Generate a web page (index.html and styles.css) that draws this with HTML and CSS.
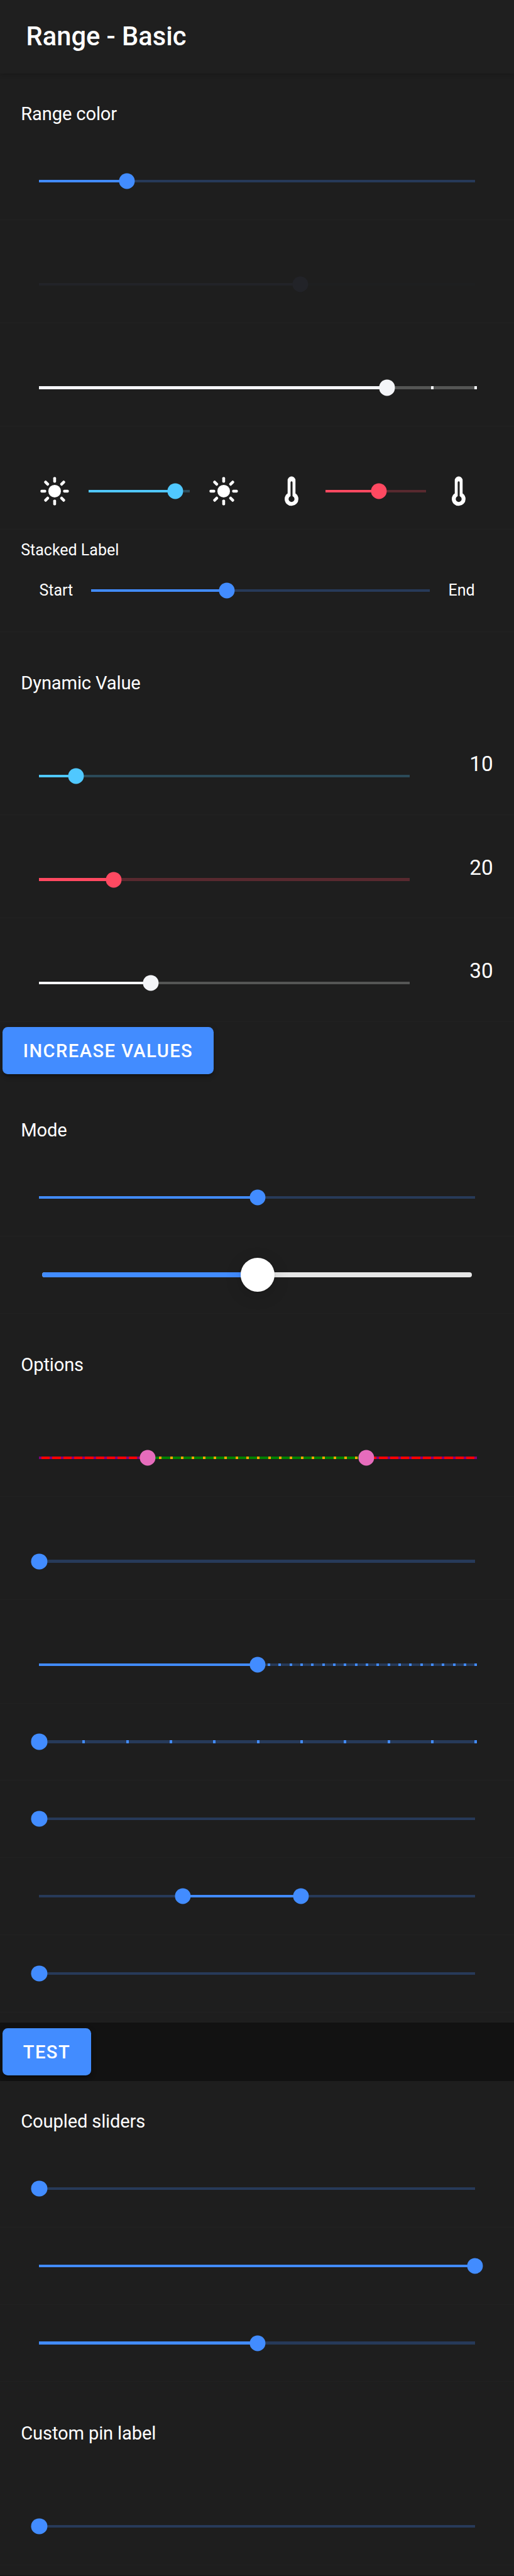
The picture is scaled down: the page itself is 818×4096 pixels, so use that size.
FILE: index.html
```html
<!DOCTYPE html>
<html lang="en">
<head>
<meta charset="utf-8">
<title>Range - Basic</title>
<link rel="stylesheet" href="styles.css">
</head>
<body>
<svg class="defs" aria-hidden="true">
  <symbol id="sunny" viewBox="0 0 66 66">
    <circle cx="33" cy="33" r="13.3"/>
    <g id="rays">
      <rect x="30" y="3.2" width="6" height="12" rx="2.4"/>
      <rect x="30" y="50.8" width="6" height="12" rx="2.4"/>
      <rect x="3.2" y="30" width="12" height="6" rx="2.4"/>
      <rect x="50.8" y="30" width="12" height="6" rx="2.4"/>
    </g>
    <use href="#rays" transform="rotate(45 33 33)"/>
  </symbol>
  <symbol id="thermometer" viewBox="0 0 512 512">
    <path stroke="#fff" stroke-width="32" d="M307.720 302.270A8 8 0 0 1 304 295.520V80a48 48 0 0 0-96 0v215.520a8 8 0 0 1-3.710 6.740 97.510 97.510 0 0 0-44.190 86.070A96 96 0 0 0 352 384a97.490 97.490 0 0 0-44.280-81.730z"/>
    <circle cx="256" cy="384" r="48" fill="#1e1e1e"/>
    <path d="M256 384V112" stroke="#1e1e1e" stroke-width="32" stroke-linecap="round"/>
  </symbol>
</svg>

<header class="toolbar"><h1>Range - Basic</h1></header>

<main>
  <section class="list">
    <h2>Range color</h2>
    <div class="item"><div class="range"><i class="fill" style="width:20%"></i><b class="knob" style="left:20.1%"></b></div></div>
    <div class="item pin"><div class="range dark"><i class="fill" style="width:60%"></i><b class="knob" style="left:60%"></b></div></div>
    <div class="item pin"><div class="range light"><i class="fill" style="width:80%"></i><i class="ticks wide"></i><b class="knob" style="left:79.85%"></b></div></div>
    <div class="item pin pair">
      <div class="group">
        <svg class="icon"><use href="#sunny"/></svg>
        <div class="range cyan"><i class="fill" style="width:85%"></i><b class="knob" style="left:85.7%"></b></div>
        <svg class="icon"><use href="#sunny"/></svg>
      </div>
      <div class="group">
        <svg class="icon"><use href="#thermometer"/></svg>
        <div class="range red"><i class="fill" style="width:53%"></i><b class="knob" style="left:53.3%"></b></div>
        <svg class="icon"><use href="#thermometer"/></svg>
      </div>
    </div>
    <div class="item stacked">
      <label>Stacked Label</label>
      <div class="labelled"><span>Start</span><div class="range"><i class="fill" style="width:40%"></i><b class="knob" style="left:40%"></b></div><span>End</span></div>
    </div>
  </section>

  <section class="list">
    <h2>Dynamic Value</h2>
    <div class="item pin valued"><div class="range cyan"><i class="fill" style="width:10%"></i><b class="knob" style="left:10%"></b></div><span class="value">10</span></div>
    <div class="item pin valued"><div class="range red"><i class="fill" style="width:20%"></i><b class="knob" style="left:20.1%"></b></div><span class="value">20</span></div>
    <div class="item pin valued"><div class="range light"><i class="fill" style="width:30%"></i><b class="knob" style="left:30.1%"></b></div><span class="value">30</span></div>
    <button class="button">Increase Values</button>
  </section>

  <section class="list">
    <h2>Mode</h2>
    <div class="item"><div class="range"><i class="fill" style="width:50%"></i><b class="knob" style="left:50.1%"></b></div></div>
    <div class="item"><div class="range ios"><i class="fill" style="width:50%"></i><b class="knob" style="left:50.1%"></b></div></div>
  </section>

  <section class="list">
    <h2>Options</h2>
    <div class="item pin"><div class="range custom"><i class="ticks"></i><div class="span"><i class="ticks"></i></div><b class="knob" style="left:24.9%"></b><b class="knob" style="left:75.1%"></b></div></div>
    <div class="item pin"><div class="range"><b class="knob" style="left:0"></b></div></div>
    <div class="item pin"><div class="range"><i class="ticks"></i><i class="fill" style="width:50%"></i><b class="knob" style="left:50.1%"></b></div></div>
    <div class="item"><div class="range"><i class="ticks wide"></i><b class="knob" style="left:0"></b></div></div>
    <div class="item"><div class="range"><b class="knob" style="left:0"></b></div></div>
    <div class="item"><div class="range"><i class="fill" style="left:33%;width:27%"></i><b class="knob" style="left:33%"></b><b class="knob" style="left:60.1%"></b></div></div>
    <div class="item"><div class="range"><b class="knob" style="left:0"></b></div></div>
  </section>

  <div class="actions"><button class="button">Test</button></div>

  <section class="list">
    <h2>Coupled sliders</h2>
    <div class="item"><div class="range"><b class="knob" style="left:0"></b></div></div>
    <div class="item"><div class="range"><i class="fill" style="width:100%"></i><b class="knob" style="left:100%"></b></div></div>
    <div class="item"><div class="range"><i class="fill" style="width:50%"></i><b class="knob" style="left:50.1%"></b></div></div>
  </section>

  <section class="list">
    <h2>Custom pin label</h2>
    <div class="item pin"><div class="range"><b class="knob" style="left:0"></b></div></div>
  </section>
</main>
</body>
</html>
```
FILE: styles.css
```css
* { box-sizing: border-box; }

html { font-size: 75.68px; }

body {
  margin: 0;
  height: 4096px;
  overflow: hidden;
  background: #121212;
  color: #fff;
  font-family: Roboto, "Noto Sans", sans-serif;
  font-size: .44rem;
}

.defs { position: absolute; width: 0; height: 0; }

.toolbar {
  position: relative;
  display: flex;
  align-items: center;
  height: 1.54rem;
  padding-left: .55rem;
  background: #1f1f1f;
  box-shadow: 0 .01rem .1rem rgba(0, 0, 0, .3);
}

.toolbar h1 {
  margin: 0;
  font-size: .55rem;
  font-weight: 500;
  line-height: 1;
}

.list {
  display: flow-root;
  padding: .22rem 0;
  background: #1e1e1e;
}

.list h2 {
  display: flex;
  align-items: center;
  height: 1.24rem;
  margin: 0;
  padding: .045rem 0 0 .44rem;
  font-size: .385rem;
  font-weight: 400;
  line-height: 1;
  letter-spacing: -.005em;
}

.item {
  display: flex;
  align-items: center;
  height: 1.6225rem;
  padding: 0 .825rem;
  border-bottom: 1px solid #222;
}

.item.pin { height: 2.17rem; padding-top: .55rem; }

/* Slider */
.range {
  --color: #428cff;
  --track: #273a59;
  position: relative;
  flex: 1;
  height: .055rem;
  background: var(--track);
}

.range.dark { --color: #222328; --track: #1e1f20; }
.range.light { --color: #f4f5f8; --track: #555655; }
.range.cyan { --color: #50c8ff; --track: #2b4a58; }
.range.red { --color: #ff4961; --track: #58292f; }

.fill {
  position: absolute;
  top: 0;
  bottom: 0;
  left: 0;
  background: var(--color);
}

.knob {
  position: absolute;
  top: 50%;
  width: .332rem;
  height: .332rem;
  border-radius: 50%;
  background: var(--color);
  transform: translate(-50%, -50%);
}

.ticks {
  --step: .229rem;
  position: absolute;
  top: 0;
  bottom: 0;
  left: 0;
  right: -.055rem;
  background: repeating-linear-gradient(90deg, var(--tick, var(--color)) 0 .055rem, transparent .055rem var(--step));
}

.ticks.wide { --step: .916rem; }

.custom { --color: #e66cbc; --tick: #800080; background: #f00; }

.custom .span {
  --tick: #ffa500;
  position: absolute;
  top: 0;
  bottom: 0;
  left: 25%;
  width: 50%;
  background: #008000;
}

.custom .span .ticks { right: 0; }

.range.ios {
  height: .11rem;
  margin: 0 .06rem;
  border-radius: .055rem;
  background: #e6e6e6;
}

.ios .fill { border-radius: .055rem 0 0 .055rem; }

.ios .knob {
  width: .715rem;
  height: .715rem;
  background: #fff;
  box-shadow: 0 .08rem .35rem rgba(0, 0, 0, .15), 0 .01rem .03rem rgba(0, 0, 0, .2);
}

/* Sliders flanked by icons */
.item.pair { gap: .77rem; }

.group { display: flex; flex: none; align-items: center; width: 4.2rem; }

.icon { flex: none; width: .66rem; height: .66rem; fill: #fff; }

.group .range { flex: none; width: 2.125rem; margin: 0 .385rem; }
.group .range.red { margin-right: .35rem; }

/* Label above slider */
.item.stacked {
  flex-direction: column;
  align-items: stretch;
  height: 2.145rem;
  padding-top: .24rem;
  line-height: 1;
}

.stacked label { margin-left: -.385rem; padding-top: .03rem; font-size: .33rem; line-height: .33rem; }

.labelled {
  display: flex;
  align-items: center;
  height: 1.36rem;
  font-size: .33rem;
}

.labelled .range { margin: 0 .385rem; }

.item.valued { padding-right: .44rem; }

.valued .range { flex: none; width: 7.785rem; }

.value { margin-left: auto; margin-top: -.51rem; line-height: 1; }

.button {
  display: flex;
  align-items: center;
  justify-content: center;
  height: .99rem;
  margin: .115rem .055rem .105rem;
  padding: .02rem .43rem 0;
  border: 0;
  border-radius: .11rem;
  background: #428cff;
  box-shadow: 0 .08rem .03rem -.055rem rgba(0, 0, 0, .2), 0 .055rem .055rem rgba(0, 0, 0, .14), 0 .03rem .14rem rgba(0, 0, 0, .12);
  color: #fff;
  font: 500 .385rem/1 Roboto, "Noto Sans", sans-serif;
  letter-spacing: .05em;
  text-transform: uppercase;
}

.actions { display: flow-root; height: 1.22rem; }
```
